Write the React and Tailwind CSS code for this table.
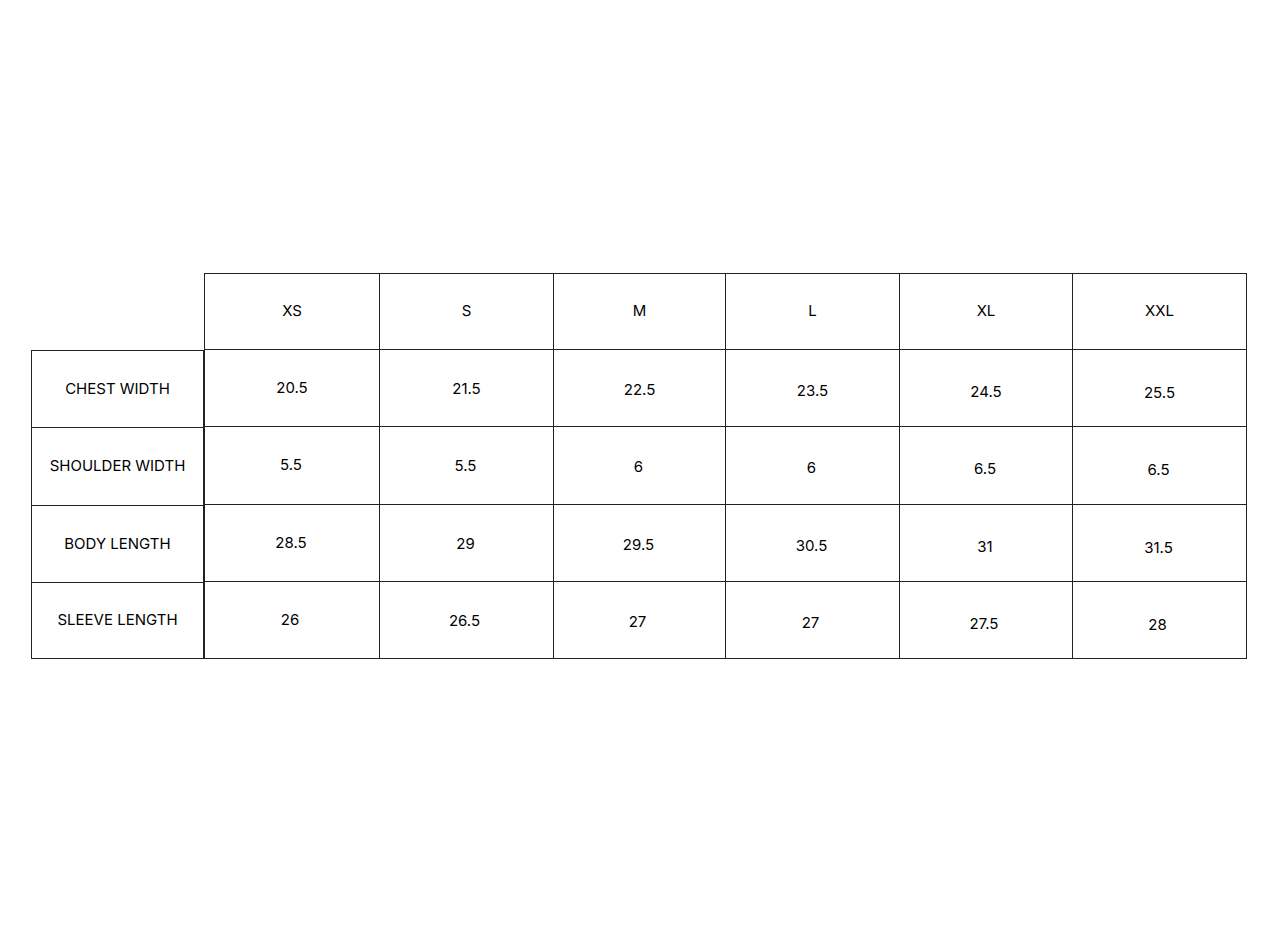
const sizes = ["XS", "S", "M", "L", "XL", "XXL"];

const rows = [
  { label: "CHEST WIDTH", values: ["20.5", "21.5", "22.5", "23.5", "24.5", "25.5"], h: "h-[77px]", pr: "pr-0" },
  { label: "SHOULDER WIDTH", values: ["5.5", "5.5", "6", "6", "6.5", "6.5"], h: "h-[78px]", pr: "pr-[2px]" },
  { label: "BODY LENGTH", values: ["28.5", "29", "29.5", "30.5", "31", "31.5"], h: "h-[77px]", pr: "pr-[2px]" },
  { label: "SLEEVE LENGTH", values: ["26", "26.5", "27", "27", "27.5", "28"], h: "h-[77px]", pr: "pr-[4px]" },
];

const colW = ["w-[175px]", "w-[174px]", "w-[172px]", "w-[174px]", "w-[173px]", "w-[174px]"];
// values sit a touch lower in each column to the right
const colPt = ["pt-0", "pt-[2px]", "pt-[4px]", "pt-[6px]", "pt-[8px]", "pt-[10px]"];

export default function App() {
  return (
    <div className="min-h-[932px] w-[1278px] bg-white font-['Inter',sans-serif] text-[15px] text-black">
      <div className="flex pl-[31px] pt-[273px]">
        {/* Row labels */}
        <div className="mt-[77px] w-[173px] border-l border-r border-[#222]">
          {rows.map((r) => (
            <div
              key={r.label}
              className={`${r.h} flex items-center justify-center border-t border-[#222] last:border-b`}
            >
              {r.label}
            </div>
          ))}
        </div>

        {/* Size table */}
        <div className="border-t border-l border-[#222]">
          <div className="flex">
            {sizes.map((s, i) => (
              <div
                key={s}
                className={`${colW[i]} flex h-[76px] items-center justify-center border-r border-b border-[#222]`}
              >
                {s}
              </div>
            ))}
          </div>
          {rows.map((r) => (
            <div key={r.label} className="flex">
              {r.values.map((v, i) => (
                <div
                  key={i}
                  className={`${colW[i]} ${r.h} ${colPt[i]} ${r.pr} flex items-center justify-center border-r border-b border-[#222]`}
                >
                  {v}
                </div>
              ))}
            </div>
          ))}
        </div>
      </div>
    </div>
  );
}
